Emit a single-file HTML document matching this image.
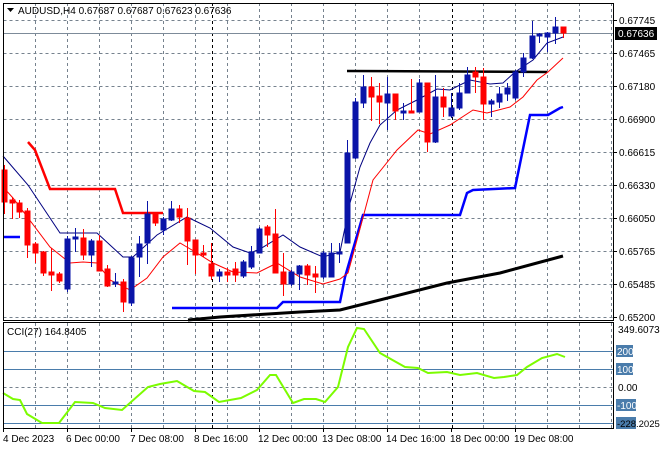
<!DOCTYPE html>
<html><head><meta charset="utf-8"><style>
html,body{margin:0;padding:0;background:#fff;width:660px;height:450px;overflow:hidden}
svg{display:block}
text{font-family:"Liberation Sans",sans-serif;font-size:10px;fill:#000}
</style></head><body>
<svg width="660" height="450" viewBox="0 0 660 450" xmlns="http://www.w3.org/2000/svg">
<rect width="660" height="450" fill="#fff"/>
<g stroke="#76828e" stroke-width="1" stroke-dasharray="3,3" fill="none" shape-rendering="crispEdges">
<path d="M3.5 20.5H614M3.5 53.5H614M3.5 86.5H614M3.5 119.5H614M3.5 152.5H614M3.5 185.5H614M3.5 218.5H614M3.5 251.5H614M3.5 284.5H614M3.5 317.5H614"/>
<path d="M35.5 3V320M67.5 3V320M99.5 3V320M131.5 3V320M163.5 3V320M195.5 3V320M227.5 3V320M259.5 3V320M291.5 3V320M323.5 3V320M355.5 3V320M387.5 3V320M419.5 3V320M483.5 3V320M515.5 3V320M547.5 3V320M579.5 3V320M611.5 3V320"/>
<path d="M35.5 323V428M67.5 323V428M99.5 323V428M131.5 323V428M163.5 323V428M195.5 323V428M227.5 323V428M259.5 323V428M291.5 323V428M323.5 323V428M355.5 323V428M387.5 323V428M419.5 323V428M483.5 323V428M515.5 323V428M547.5 323V428M579.5 323V428M611.5 323V428"/>
<path d="M3.5 387.5H614"/>
</g>
<g stroke="#000" stroke-dasharray="3,3" shape-rendering="crispEdges"><path d="M212.5 3V320M452.5 3V320M212.5 323V428M452.5 323V428"/></g>
<path d="M3 33.5H614" stroke="#7d8b99" stroke-width="1" shape-rendering="crispEdges"/>
<g stroke="#4a7cab" stroke-width="1" shape-rendering="crispEdges"><path d="M3 351.5H614M3 369.5H614M3 405.5H614M3 423.5H614"/></g>

<polyline fill="none" stroke="#000" stroke-width="3" points="188,320 220,317 300,312 340,310 447,283 500,273 563,256"/>
<polyline fill="none" stroke="#000" stroke-width="2.5" points="347,71 547,72"/>
<polyline fill="none" stroke="#ff0000" stroke-width="2.5" points="28,142 35,150 50,189 115,189 123,213 163,213"/>
<polyline fill="none" stroke="#0000ff" stroke-width="2.5" points="3,237 20,237"/>
<polyline fill="none" stroke="#0000ff" stroke-width="2.5" points="172,308 277,308 283,302 340,302 345,277 363,215 460,215 467,193 473,190 515,188 530,115 548,115 560,108 563,107"/>
<polyline fill="none" stroke="#000080" stroke-width="1" points="3,156 28,185 60,233 97,233 123,257 133,257 157,235 187,217 210,228 233,247 250,253 260,249 283,235 300,247 323,257 340,252 350,203 360,167 370,143 380,125 397,110 417,100 437,89 450,90 470,80 490,84 503,83 515,72 533,60 547,43 563,37"/>
<polyline fill="none" stroke="#ff0000" stroke-width="1" points="3,187 13,198 50,247 70,263 83,262 97,263 110,280 130,290 147,278 163,257 180,243 197,253 213,263 233,272 257,273 277,263 300,277 323,284 340,279 348,273 357,240 373,180 397,150 418,130 430,134 450,125 473,110 487,113 510,107 523,97 537,80 548,72 563,58"/>

<g stroke-width="1" shape-rendering="crispEdges">
<g stroke="#ff0000" fill="#ff0000">
<path d="M4.5 165V214M12.5 197V219M19.5 200V218M27.5 208V258M35.5 242V263M43.5 251V276M51.5 248V291M59.5 272V283M83.5 229V260M99.5 235V271M107.5 265V287M123.5 279V312M155.5 212V226M179.5 205V223M187.5 208V265M195.5 240V274M203.5 245V257M211.5 243V280M227.5 268V282M235.5 262V282M267.5 225V247M275.5 209V273M283.5 253V296M307.5 264V285M315.5 266V293M371.5 77V121M379.5 83V124M395.5 94V120M411.5 79V113M427.5 83V152M443.5 88V117M475.5 67V93M483.5 68V120M563.5 27V38"/>
<rect x="2" y="170" width="5" height="32"/><rect x="10" y="200" width="5" height="3"/><rect x="17" y="203" width="5" height="9"/><rect x="25" y="211" width="5" height="34"/><rect x="33" y="244" width="5" height="9"/><rect x="41" y="252" width="5" height="21"/><rect x="49" y="272" width="5" height="3"/><rect x="57" y="274" width="5" height="7"/><rect x="81" y="238" width="5" height="17"/><rect x="97" y="241" width="5" height="30"/><rect x="105" y="269" width="5" height="17"/><rect x="121" y="282" width="5" height="20"/><rect x="153" y="214" width="5" height="9"/><rect x="177" y="209" width="5" height="8"/><rect x="185" y="218" width="5" height="23"/><rect x="193" y="240" width="5" height="15"/><rect x="201" y="253" width="5" height="2"/><rect x="209" y="264" width="5" height="12"/><rect x="225" y="272" width="5" height="3"/><rect x="233" y="269" width="5" height="6"/><rect x="265" y="227" width="5" height="8"/><rect x="273" y="234" width="5" height="39"/><rect x="281" y="272" width="5" height="12"/><rect x="305" y="266" width="5" height="9"/><rect x="313" y="274" width="5" height="3"/><rect x="369" y="87" width="5" height="10"/><rect x="377" y="96" width="5" height="6"/><rect x="393" y="94" width="5" height="17"/><rect x="409" y="111" width="5" height="2"/><rect x="425" y="83" width="5" height="59"/><rect x="441" y="97" width="5" height="10"/><rect x="473" y="72" width="5" height="5"/><rect x="481" y="77" width="5" height="27"/><rect x="561" y="27" width="5" height="6"/>
</g>
<g stroke="#0a14a8" fill="#0a14a8">
<path d="M67.5 236V292M75.5 228V252M91.5 239V267M115.5 273V287M131.5 256V306M139.5 236V277M147.5 201V264M163.5 217V235M171.5 201V221M219.5 269V282M243.5 260V278M251.5 246V269M259.5 227V253M291.5 270V286M299.5 265V290M323.5 251V279M331.5 243V263M339.5 243V263M347.5 140V243M355.5 98V159M363.5 75V108M387.5 77V130M403.5 103V120M419.5 79V112M435.5 75V143M451.5 93V118M459.5 83V110M467.5 67V93M491.5 99V117M499.5 87V108M507.5 83V101M515.5 70V100M523.5 53V77M532.5 21V59M539.5 33V43M547.5 32V52M555.5 17V44"/>
<rect x="65" y="239" width="5" height="50"/><rect x="73" y="237" width="5" height="2"/><rect x="89" y="241" width="5" height="14"/><rect x="113" y="282" width="5" height="2"/><rect x="129" y="258" width="5" height="45"/><rect x="137" y="244" width="5" height="13"/><rect x="145" y="214" width="5" height="29"/><rect x="161" y="219" width="5" height="11"/><rect x="169" y="209" width="5" height="11"/><rect x="217" y="272" width="5" height="4"/><rect x="241" y="262" width="5" height="14"/><rect x="249" y="252" width="5" height="15"/><rect x="257" y="229" width="5" height="24"/><rect x="289" y="272" width="5" height="12"/><rect x="297" y="266" width="5" height="8"/><rect x="321" y="253" width="5" height="24"/><rect x="329" y="253" width="5" height="24"/><rect x="337" y="252" width="5" height="2"/><rect x="345" y="153" width="5" height="90"/><rect x="353" y="102" width="5" height="56"/><rect x="361" y="87" width="5" height="16"/><rect x="385" y="94" width="5" height="9"/><rect x="401" y="111" width="5" height="2"/><rect x="417" y="83" width="5" height="29"/><rect x="433" y="97" width="5" height="45"/><rect x="449" y="108" width="5" height="8"/><rect x="457" y="93" width="5" height="15"/><rect x="465" y="75" width="5" height="18"/><rect x="489" y="101" width="5" height="3"/><rect x="497" y="94" width="5" height="8"/><rect x="505" y="88" width="5" height="6"/><rect x="513" y="72" width="5" height="26"/><rect x="521" y="58" width="5" height="14"/><rect x="530" y="36" width="5" height="22"/><rect x="537" y="34" width="5" height="2"/><rect x="545" y="33" width="5" height="4"/><rect x="553" y="27" width="5" height="6"/>
</g>
</g>

<polyline fill="none" stroke="#7cfc00" stroke-width="2" points="3,393 13,399 20,400 27,414 42,423 59,423 75,402 93,403 105,408 122,410 148,387 160,384 177,381 194,391 205,392 219,402 241,398 257,390 270,375 276,375 293,403 304,399 316,399 325,402 338,387 348,347 357,328 364,329 380,353 405,367 418,368 428,373 447,372 460,375 477,373 494,378 504,377 517,375 527,367 542,358 557,354 565,357"/>

<g fill="none" stroke="#000" stroke-width="1" shape-rendering="crispEdges">
<rect x="3.5" y="3.5" width="610" height="317"/>
<rect x="3.5" y="322.5" width="610" height="106"/>
</g>

<path d="M7 8H14L10.5 12Z" fill="#000"/>
<text x="18" y="14">AUDUSD,H4  0.67687 0.67687 0.67623 0.67636</text>
<text x="7" y="335">CCI(27) 164.8405</text>

<g shape-rendering="crispEdges" stroke="#000"><path d="M614 20.5h3M614 53.5h3M614 86.5h3M614 119.5h3M614 152.5h3M614 185.5h3M614 218.5h3M614 251.5h3M614 284.5h3M614 317.5h3"/></g>
<text x="619" y="24">0.67745</text>
<text x="619" y="57">0.67465</text>
<text x="619" y="90">0.67180</text>
<text x="619" y="123">0.66900</text>
<text x="619" y="156">0.66615</text>
<text x="619" y="189">0.66330</text>
<text x="619" y="222">0.66050</text>
<text x="619" y="255">0.65765</text>
<text x="619" y="288">0.65485</text>
<text x="619" y="321">0.65200</text>
<rect x="615" y="27" width="42" height="13" fill="#000"/>
<text x="618" y="37" style="fill:#fff">0.67636</text>

<text x="618" y="333">349.6073</text>
<rect x="616" y="345" width="17" height="12" fill="#4a7cab"/><text x="617" y="355" style="fill:#fff">200</text>
<rect x="616" y="363" width="17" height="12" fill="#4a7cab"/><text x="617" y="373" style="fill:#fff">100</text>
<text x="618" y="391">0.00</text>
<rect x="616" y="399" width="20" height="12" fill="#4a7cab"/><text x="617" y="409" style="fill:#fff">-100</text>
<rect x="616" y="417" width="20" height="12" fill="#4a7cab"/><text x="617" y="427" style="font-size:9.5px">-228.2025</text>

<g shape-rendering="crispEdges" stroke="#000"><path d="M3.5 429v3M67.5 429v3M131.5 429v3M195.5 429v3M259.5 429v3M323.5 429v3M387.5 429v3M451.5 429v3M515.5 429v3"/></g>
<text x="3" y="442">4 Dec 2023</text>
<text x="66" y="442">6 Dec 00:00</text>
<text x="130" y="442">7 Dec 08:00</text>
<text x="194" y="442">8 Dec 16:00</text>
<text x="258" y="442">12 Dec 00:00</text>
<text x="322" y="442">13 Dec 08:00</text>
<text x="386" y="442">14 Dec 16:00</text>
<text x="450" y="442">18 Dec 00:00</text>
<text x="514" y="442">19 Dec 08:00</text>
</svg>
</body></html>
